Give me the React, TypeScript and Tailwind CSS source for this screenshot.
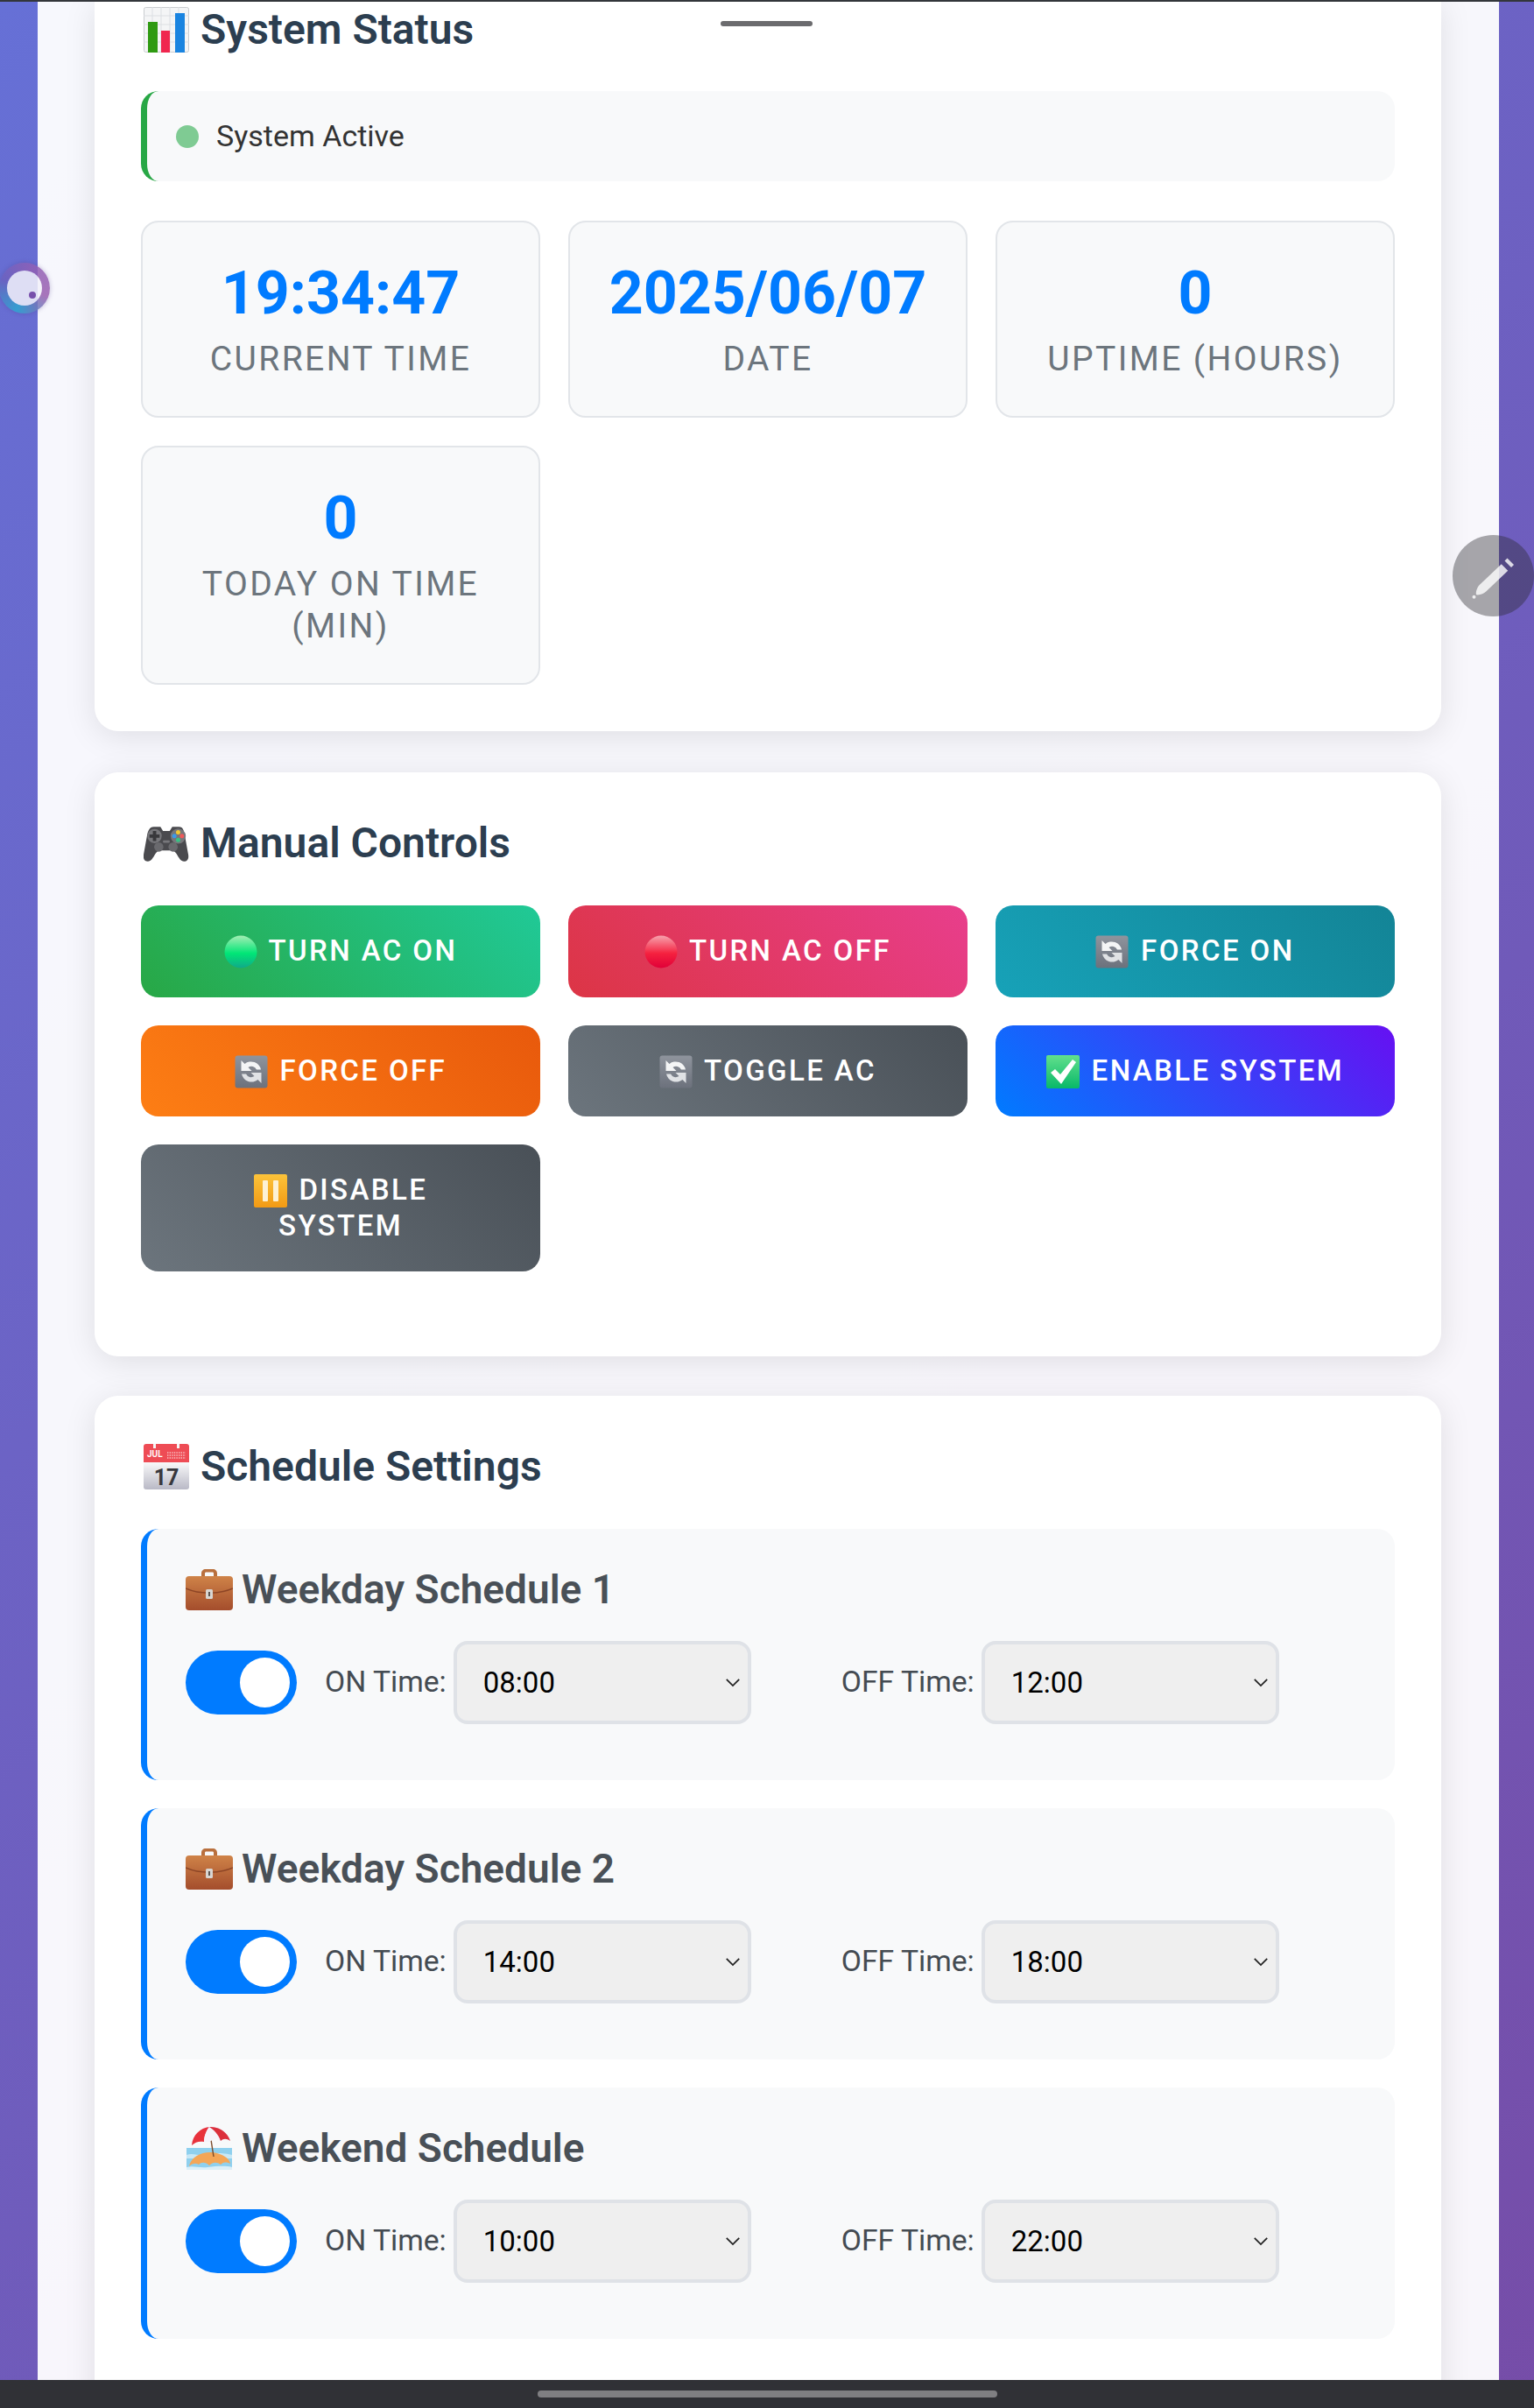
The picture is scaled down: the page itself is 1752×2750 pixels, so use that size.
import type { ReactNode } from "react";

function ChartEmoji() {
  return (
    <svg viewBox="0 0 52 52" className="w-[52px] h-[52px] shrink-0">
      <rect x="0.5" y="0.5" width="51" height="51" rx="2" fill="#f4f5f6" stroke="#c9ccd0" />
      <path d="M0 10H52M0 20H52M0 30H52M0 40H52M10 0V52M20 0V52M30 0V52M40 0V52" stroke="#dcdfe3" strokeWidth="1" />
      <rect x="5" y="17" width="11" height="35" fill="#2f9a12" />
      <rect x="20" y="27" width="10" height="25" fill="#f0274f" />
      <rect x="36" y="7" width="11" height="45" fill="#1a84e0" />
    </svg>
  );
}

function GamepadEmoji() {
  return (
    <svg viewBox="0 0 54 44" className="w-[52px] h-[43px] shrink-0">
      <path d="M12 2h8l3 5h8l3-5h8c5 0 6 5 7 11l4 22c1 6-2 8-5 8-4 0-6-4-9-9-2-3-4-4-7-4H21c-3 0-5 1-7 4-3 5-5 9-9 9-3 0-6-2-5-8l4-22C5 7 7 2 12 2z" fill="#4a4a4e" />
      <circle cx="13" cy="13" r="8.5" fill="#77777b" />
      <path d="M11 7h4v4h4v4h-4v4h-4v-4H7v-4h4z" fill="#38383b" />
      <circle cx="41" cy="13" r="9" fill="#77777b" />
      <circle cx="41" cy="8.5" r="2.6" fill="#f4c92f" />
      <circle cx="36.5" cy="13" r="2.6" fill="#3b9be8" />
      <circle cx="45.5" cy="13" r="2.6" fill="#ef5a5a" />
      <circle cx="41" cy="17.5" r="2.6" fill="#38c284" />
      <rect x="23" y="18" width="8" height="3" rx="1" fill="#77777b" />
      <circle cx="18" cy="26" r="5.5" fill="#6a6a6e" />
      <circle cx="35" cy="26" r="5.5" fill="#6a6a6e" />
    </svg>
  );
}

function CalendarEmoji() {
  return (
    <svg viewBox="0 0 52 52" className="w-[52px] h-[52px] shrink-0">
      <defs>
        <linearGradient id="calBody" x1="0" y1="0" x2="0" y2="1">
          <stop offset="0" stopColor="#fbfbfb" />
          <stop offset="1" stopColor="#b9b9c6" />
        </linearGradient>
      </defs>
      <rect x="0" y="20" width="52" height="32" rx="3" fill="url(#calBody)" />
      <path d="M3 0h46a3 3 0 0 1 3 3v18H0V3a3 3 0 0 1 3-3z" fill="#ee4c55" />
      <rect x="11" y="0" width="3" height="5" fill="#f5f5f5" />
      <rect x="38" y="0" width="3" height="5" fill="#f5f5f5" />
      <text x="4" y="15" fontSize="10" fontFamily="Roboto, sans-serif" fill="#fff">JUL</text>
      <path d="M27 10H48M27 13H48M27 16H48" stroke="#f9c1c4" strokeWidth="1.4" strokeDasharray="1.4 1.2" />
      <text x="26" y="47" textAnchor="middle" fontSize="25" fontWeight="700" fontFamily="Roboto, sans-serif" fill="#38383d">17</text>
    </svg>
  );
}

function BriefcaseEmoji() {
  return (
    <svg viewBox="0 0 54 48" className="w-[54px] h-[48px] shrink-0">
      <defs>
        <linearGradient id="caseBody" x1="0" y1="0" x2="0" y2="1">
          <stop offset="0" stopColor="#cf8348" />
          <stop offset="1" stopColor="#a44d2c" />
        </linearGradient>
      </defs>
      <path d="M18 11V6c0-3 2-5 5-5h8c3 0 5 2 5 5v5h-4V6c0-1-.5-1.500-1.500-1.500h-7C22.500 4.500 22 5 22 6v5z" fill="#b9703e" />
      <rect x="0" y="9" width="54" height="39" rx="4" fill="url(#caseBody)" />
      <path d="M0 23c16 7 38 7 54 0" fill="none" stroke="#8d4526" strokeWidth="1.4" />
      <rect x="23" y="24" width="8" height="11" rx="1.500" fill="#d9d6d2" />
      <rect x="26" y="27" width="2" height="5" fill="#5b5551" />
    </svg>
  );
}

function BeachEmoji() {
  return (
    <svg viewBox="0 0 54 50" className="w-[54px] h-[50px] shrink-0">
      <rect x="1" y="25" width="52" height="25" fill="#8fd0ee" />
      <path d="M1 33c8-3 14 2 22 0s18-3 30 0v4H1z" fill="#c8e8f6" />
      <path d="M4 46c2-12 16-17 26-16 10 1 20 6 21 13-5-2-8-2-11 1-4-3-9-3-13 1-4-4-9-4-12-1-3-2-7-2-11 2z" fill="#f4a657" />
      <path d="M1 47c8-2 14 1 24 0s20-2 28 0v3H1z" fill="#dceff8" />
      <path d="M27 3l5 32" stroke="#7a4b2a" strokeWidth="1.400" />
      <path d="M7 22C8 10 17 2 27 1c11-1 21 6 24 16-4-3-8-3-11 0-4-3-9-3-13 1-6-3-14-2-20 4z" fill="#e9e3f7" />
      <path d="M7 22C8 10 17 2 27 1c-3 4-6 10-6 17-5-1-10 0-14 4z" fill="#e8323c" />
      <path d="M27 1c5 3 11 9 13 16-4-3-9-2-13 1-2 0-4 0-6 0 0-7 3-13 6-17z" fill="#f6f3fb" />
      <path d="M27 1c11-1 21 6 24 16-4-3-8-3-11 0-2-7-8-13-13-16z" fill="#dc2f3c" />
    </svg>
  );
}

function BallEmoji({ from, mid, to }: { from: string; mid: string; to: string }) {
  const id = `ball${to.slice(1)}`;
  return (
    <svg viewBox="0 0 38 38" className="inline-block w-[38px] h-[38px] mr-[3px] align-[-9px]">
      <defs>
        <linearGradient id={id} x1="0" y1="0" x2="0" y2="1">
          <stop offset="0" stopColor={from} />
          <stop offset="0.55" stopColor={mid} />
          <stop offset="1" stopColor={to} />
        </linearGradient>
      </defs>
      <circle cx="19" cy="19" r="18.500" fill={`url(#${id})`} />
    </svg>
  );
}

function RefreshEmoji() {
  return (
    <svg viewBox="0 0 38 38" className="inline-block w-[38px] h-[38px] mr-[3px] align-[-9px]">
      <defs>
        <linearGradient id="refreshBg" x1="0" y1="0" x2="0" y2="1">
          <stop offset="0" stopColor="#8f949d" />
          <stop offset="1" stopColor="#6c717c" />
        </linearGradient>
      </defs>
      <rect x="0.500" y="0.500" width="37" height="37" rx="3" fill="url(#refreshBg)" />
      <path d="M30 16.500A11.500 11.500 0 0 0 11.500 10L7.500 6v12h12l-4-4A6.500 6.500 0 0 1 25 16.500z" fill="#f4f5f6" />
      <path d="M8 21.500A11.500 11.500 0 0 0 26.500 28l4 4V20h-12l4 4A6.500 6.500 0 0 1 13 21.500z" fill="#e0e2e5" />
    </svg>
  );
}

function CheckEmoji() {
  return (
    <svg viewBox="0 0 38 38" className="inline-block w-[38px] h-[38px] mr-[3px] align-[-9px]">
      <defs>
        <linearGradient id="checkBg" x1="0" y1="0" x2="0" y2="1">
          <stop offset="0" stopColor="#62e08c" />
          <stop offset="1" stopColor="#08b869" />
        </linearGradient>
      </defs>
      <rect width="38" height="38" rx="2" fill="url(#checkBg)" />
      <path d="M5 20l5-4 6 6L30 5l4 3-17 25z" fill="#fff" />
    </svg>
  );
}

function PauseEmoji() {
  return (
    <svg viewBox="0 0 38 38" className="inline-block w-[38px] h-[38px] mr-[3px] align-[-9px]">
      <defs>
        <linearGradient id="pauseBg" x1="0" y1="0" x2="0" y2="1">
          <stop offset="0" stopColor="#fcc33a" />
          <stop offset="1" stopColor="#f29a14" />
        </linearGradient>
      </defs>
      <rect width="38" height="38" rx="2" fill="url(#pauseBg)" />
      <rect x="10" y="7" width="6" height="24" rx="1" fill="#fdf1d4" />
      <rect x="22" y="7" width="6" height="24" rx="1" fill="#fdf1d4" />
    </svg>
  );
}

const stats = [
  { value: "19:34:47", label: "Current Time" },
  { value: "2025/06/07", label: "Date" },
  { value: "0", label: "Uptime (Hours)" },
  { value: "0", label: "Today On Time (min)" },
];

const controls: { label: ReactNode; emoji: ReactNode; bg: string }[] = [
  {
    label: "Turn AC On",
    emoji: <BallEmoji from="#a5eeb4" mid="#00e676" to="#10a98a" />,
    bg: "bg-[linear-gradient(45deg,#28a745,#20c997)]",
  },
  {
    label: "Turn AC Off",
    emoji: <BallEmoji from="#f7a2ad" mid="#f5213f" to="#e00038" />,
    bg: "bg-[linear-gradient(45deg,#dc3545,#e83e8c)]",
  },
  { label: "Force On", emoji: <RefreshEmoji />, bg: "bg-[linear-gradient(45deg,#17a2b8,#138496)]" },
  { label: "Force Off", emoji: <RefreshEmoji />, bg: "bg-[linear-gradient(45deg,#fd7e14,#e8590c)]" },
  { label: "Toggle AC", emoji: <RefreshEmoji />, bg: "bg-[linear-gradient(45deg,#6c757d,#495057)]" },
  { label: "Enable System", emoji: <CheckEmoji />, bg: "bg-[linear-gradient(45deg,#007bff,#6610f2)]" },
  {
    label: (
      <>
        Disable
        <br />
        System
      </>
    ),
    emoji: <PauseEmoji />,
    bg: "bg-[linear-gradient(45deg,#6c757d,#495057)]",
  },
];

const schedules = [
  { title: "Weekday Schedule 1", emoji: <BriefcaseEmoji />, on: "08:00", off: "12:00" },
  { title: "Weekday Schedule 2", emoji: <BriefcaseEmoji />, on: "14:00", off: "18:00" },
  { title: "Weekend Schedule", emoji: <BeachEmoji />, on: "10:00", off: "22:00" },
];

const times = ["08:00", "10:00", "12:00", "14:00", "18:00", "22:00"];

function SectionTitle({ emoji, children }: { emoji: ReactNode; children: ReactNode }) {
  return (
    <h2 className="flex items-center gap-[13px] h-[56px] pl-[3px] text-[48px] leading-[56px] font-semibold text-[#2c3e50]">
      {emoji}
      {children}
    </h2>
  );
}

function TimeField({ label, value, className }: { label: string; value: string; className?: string }) {
  return (
    <label className={`flex items-center gap-[8px] text-[33.7px] text-[#444b52] ${className ?? ""}`}>
      {label}
      <span className="relative block w-[340px]">
        <select
          defaultValue={value}
          className="block appearance-none w-full h-[95px] pl-[30px] text-[33px] text-black bg-[#efefef] border-[4px] border-[#dfe2e7] rounded-[16px]"
        >
          {times.map((t) => (
            <option key={t}>{t}</option>
          ))}
        </select>
        <svg viewBox="0 0 20 12" className="absolute right-[12px] top-[42px] w-[18px] h-[11px] pointer-events-none">
          <path d="M2 2l8 8 8-8" fill="none" stroke="#222" strokeWidth="2" />
        </svg>
      </span>
    </label>
  );
}

export default function App() {
  return (
    <div className="relative w-[1752px] h-[2750px] overflow-hidden bg-[linear-gradient(135deg,#6670d6,#764da8)] font-['Roboto',sans-serif]">
      <div className="ml-[43px] mr-[40px] h-full pl-[65px] pr-[66px] bg-white/95">
        {/* System status */}
        <section className="bg-white rounded-b-[27px] px-[53px] pt-[6px] pb-[53px] shadow-[0_6px_36px_rgba(0,0,0,0.1)]">
          <SectionTitle emoji={<ChartEmoji />}>System Status</SectionTitle>
          <div className="flex items-center gap-[20px] h-[103px] mt-[42px] pl-[33px] bg-[#f8f9fa] border-l-[7px] border-[#28a745] rounded-[20px] text-[34px] text-[#333]">
            <span className="w-[26px] h-[26px] rounded-full bg-[#7fcb93]" />
            System Active
          </div>
          <div className="grid grid-cols-3 gap-[32px] mt-[45px]">
            {stats.map((s) => (
              <div
                key={s.label}
                className="pt-[46px] pb-[41px] px-[40px] text-center bg-[#f8f9fa] border-[2px] border-[#e2e5e9] rounded-[20px]"
              >
                <div className="h-[70px] text-[68px] leading-[70px] font-bold text-[#007bff]">{s.value}</div>
                <div className="mt-[16px] text-[39px] leading-[48px] tracking-[2.4px] uppercase text-[#6c757d]">
                  {s.label}
                </div>
              </div>
            ))}
          </div>
        </section>

        {/* Manual controls */}
        <section className="mt-[47px] bg-white rounded-[27px] px-[53px] pt-[53px] pb-[97px] shadow-[0_6px_36px_rgba(0,0,0,0.1)]">
          <SectionTitle emoji={<GamepadEmoji />}>Manual Controls</SectionTitle>
          <div className="grid grid-cols-3 gap-[32px] mt-[43px] items-start">
            {controls.map((c, i) => (
              <button
                key={i}
                className={`py-[32px] px-[40px] rounded-[20px] text-center text-[33px] leading-[40.5px] font-medium tracking-[2.4px] uppercase text-white ${c.bg}`}
              >
                {c.emoji} {c.label}
              </button>
            ))}
          </div>
        </section>

        {/* Schedule settings */}
        <section className="mt-[45px] bg-white rounded-t-[27px] px-[53px] pt-[53px] h-[1300px] shadow-[0_6px_36px_rgba(0,0,0,0.1)]">
          <SectionTitle emoji={<CalendarEmoji />}>Schedule Settings</SectionTitle>
          <div className="flex flex-col gap-[32px] mt-[43px]">
            {schedules.map((s) => (
              <div
                key={s.title}
                className="pl-[44px] pt-[42px] pb-[64px] bg-[#f8f9fa] border-l-[7px] border-[#007bff] rounded-[20px]"
              >
                <h3 className="flex items-center gap-[10px] h-[54px] text-[46px] leading-[54px] font-semibold text-[#495057]">
                  {s.emoji}
                  {s.title}
                </h3>
                <div className="flex items-center mt-[32px]">
                  <span className="flex items-center justify-end w-[127px] h-[73px] pr-[8px] rounded-full bg-[#007bff]">
                    <span className="w-[57px] h-[57px] rounded-full bg-white" />
                  </span>
                  <TimeField label="ON Time:" value={s.on} className="ml-[32px]" />
                  <TimeField label="OFF Time:" value={s.off} className="ml-[103px]" />
                </div>
              </div>
            ))}
          </div>
        </section>
      </div>

      {/* overlays from the phone screen */}
      <div className="absolute top-0 left-0 right-0 h-[2px] bg-[#33363b]" />
      <div className="absolute top-[24px] left-[823px] w-[105px] h-[6px] rounded-full bg-[#6b6b6e]" />

      <div className="absolute left-[-1px] top-[300px] w-[58px] h-[58px] rounded-full flex items-center justify-center bg-[conic-gradient(from_200deg,#2ea6d0,#6a62c0,#9060b5,#9a5fb0,#2ea6d0)] opacity-85 shadow-[0_0_5px_rgba(80,60,140,0.4)]">
        <div className="relative w-[40px] h-[40px] rounded-full bg-[#f3f2fa]">
          <span className="absolute left-[25px] top-[24px] w-[8px] h-[8px] rounded-full bg-[#7a4aa5]" />
        </div>
      </div>

      <div className="absolute left-[1659px] top-[611px] w-[93px] h-[93px] rounded-full flex items-center justify-center bg-[#2a2a30]/40">
        <svg viewBox="0 0 24 24" className="w-[60px] h-[60px] opacity-80">
          <path d="M15.500 6.500l3 3L8.500 19c-1 1-3 1.800-4.500 1.500-.3-1.500.5-3.500 1.500-4.500z" fill="#fff" />
          <path d="M17 5l1.200-1.200 3 3L20 8z" fill="#fff" />
          <circle cx="3" cy="21.500" r="0.800" fill="#fff" />
        </svg>
      </div>

      <div className="absolute bottom-0 left-0 right-0 h-[32px] flex items-center justify-center bg-[#303136]">
        <div className="w-[525px] h-[8px] rounded-full bg-[#7f7f82]" />
      </div>
    </div>
  );
}
